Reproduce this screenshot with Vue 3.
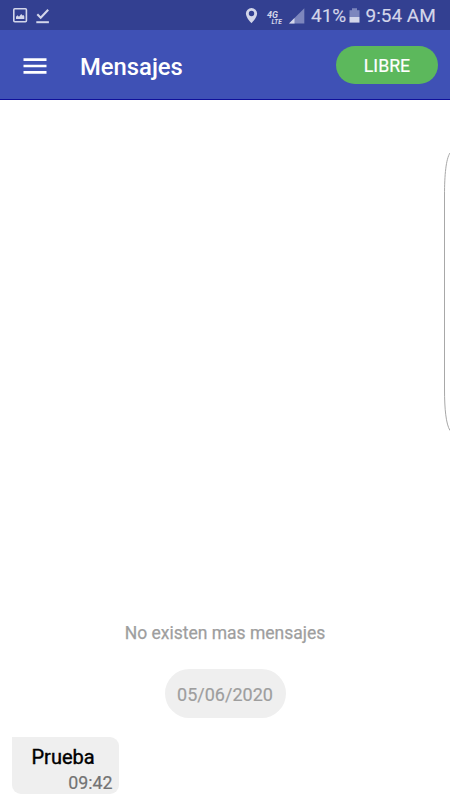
<script setup>
const title = 'Mensajes'
const messages = [{ text: 'Prueba', time: '09:42' }]
</script>

<template>
  <div class="screen">
    <div class="status">
      <svg class="notices" width="40" height="18" viewBox="0 0 40 18">
        <rect x="1.8" y="1.8" width="12.6" height="13" rx="1" fill="none" stroke="#d3d6ea" stroke-width="1.6" />
        <path d="M4 12V9.8l1.5-1.6L7 9.7l2.2-2.6 1.3 1.5 1-.7.8 1.5V12z" fill="#d3d6ea" />
        <path d="M25.3 7.3l3.4 3.4 7.5-8" fill="none" stroke="#d3d6ea" stroke-width="2.1" />
        <path d="M24.3 15.2h12.6" stroke="#d3d6ea" stroke-width="2" />
      </svg>
      <svg class="signals" width="62" height="20" viewBox="0 0 62 20">
        <path fill-rule="evenodd" d="M7.5 3a5.6 5.6 0 0 0-5.6 5.6c0 4.2 5.6 9.6 5.6 9.6s5.6-5.4 5.6-9.6A5.6 5.6 0 0 0 7.5 3zm0 2.8a2.7 2.7 0 1 1 0 5.4 2.7 2.7 0 0 1 0-5.4z" fill="#d3d6ea" />
        <text x="22.9" y="13.4" class="net">4G</text>
        <text x="27.6" y="18.6" class="lte">LTE</text>
        <path d="M45 18.4L60.3 3.2v15.2z" fill="#7d86bd" />
        <path d="M45 18.4l5.5-5.4v5.4z" fill="#d3d6ea" />
      </svg>
      <span class="percent">41%</span>
      <svg class="battery" width="11" height="16" viewBox="0 0 11 16">
        <path d="M3 .3h5v2h2.5V9H.5V2.3H3z" fill="#7d86bd" />
        <path d="M.5 9h10v5.6H.5z" fill="#d3d6ea" />
      </svg>
      <span class="clock">9:54 AM</span>
    </div>
    <header class="toolbar">
      <button class="menu" aria-label="Menu">
        <svg width="24" height="16" viewBox="0 0 24 16">
          <path d="M.5 1.6h23M.5 8h23M.5 14.4h23" stroke="#fff" stroke-width="2.6" />
        </svg>
      </button>
      <h1>{{ title }}</h1>
      <button class="state">LIBRE</button>
    </header>
    <main>
      <p class="empty">No existen mas mensajes</p>
      <span class="date">05/06/2020</span>
      <div v-for="m in messages" :key="m.time" class="bubble">
        <span class="body">{{ m.text }}</span>
        <span class="time">{{ m.time }}</span>
      </div>
      <svg class="edge" width="8" height="284" viewBox="0 0 8 284">
        <path d="M8 2C4 8 2.5 24 2.5 44v194C2.5 258 4 273 8 279.5" fill="none" stroke="#a8a8a8" stroke-width="1" />
      </svg>
    </main>
  </div>
</template>

<style>
body { margin: 0; background: #fff; }
</style>

<style scoped>
.screen { width: 450px; height: 800px; display: flex; flex-direction: column; overflow: hidden; font-family: Roboto, sans-serif; background: #fff; }
.status { box-sizing: border-box; height: 30px; flex: none; display: flex; align-items: center; padding: 0 0 0 12px; background: #334091; color: #d3d6ea; font-size: 19px; line-height: 30px; white-space: nowrap; -webkit-text-stroke: .15px #d3d6ea; }
.notices { margin-top: 1px; }
.signals { margin: 0 0 0 192px; -webkit-text-stroke: 0; }
.net { font-size: 9px; font-weight: 700; font-style: italic; fill: #d3d6ea; }
.lte { font-size: 6.5px; font-weight: 700; font-style: italic; fill: #d3d6ea; }
.percent { width: 38px; margin-left: 5px; padding-top: 2px; }
.battery { margin-top: 1px; margin-left: -.5px; }
.clock { margin-left: 6px; padding-top: 2px; }
.toolbar { box-sizing: border-box; height: 70px; flex: none; display: flex; align-items: center; padding: 0 12px 0 23px; background: #3f51b5; border-bottom: 1px solid #10109a; color: #fff; }
button { border: 0; padding: 0; color: inherit; font-family: inherit; }
.menu { width: 24px; height: 16px; display: flex; background: none; margin-top: 2px; }
h1 { flex: 1; margin: 4px 0 0 33px; font-size: 23.8px; font-weight: 500; line-height: 30px; }
.state { width: 102px; height: 38px; border-radius: 19px; background: #5cb85c; font-size: 17.7px; font-weight: 400; line-height: 38px; padding-top: 1px; -webkit-text-stroke: .2px #fff; }
main { flex: 1; position: relative; box-sizing: border-box; display: flex; flex-direction: column; align-items: center; justify-content: flex-end; padding: 0 12px 6px; }
.empty { margin: 0 0 25px; color: #9e9e9e; font-size: 17.5px; line-height: 22px; -webkit-text-stroke: .25px #9e9e9e; }
.date { width: 121px; height: 49px; border-radius: 24.5px; background: #efefef; color: #9e9e9e; font-size: 18px; line-height: 51px; text-align: center; margin-bottom: 19px; -webkit-text-stroke: .2px #9e9e9e; }
.bubble { align-self: flex-start; box-sizing: border-box; width: 107px; height: 57px; padding: 8px 6.5px 0 19.5px; display: flex; flex-direction: column; background: #efefef; border-radius: 0 9px 9px 9px; }
.body { color: #000; font-size: 20px; line-height: 24px; -webkit-text-stroke: .4px #000; }
.time { align-self: flex-end; color: #737373; font-size: 17.8px; line-height: 24px; margin-top: 2px; -webkit-text-stroke: .2px #737373; }
.edge { position: absolute; right: 0; top: 51px; }
</style>
